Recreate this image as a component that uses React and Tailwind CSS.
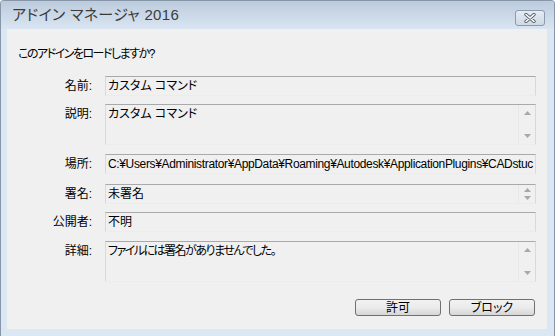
import React from "react";

const jp = "font-['Liberation_Sans','Noto_Sans_CJK_JP',sans-serif] [font-feature-settings:'palt']";

function Arrows({ small }) {
  return (
    <div className={`flex flex-col items-center justify-between w-[17px] border-l border-[#e8e8e8] ${small ? "py-[3px]" : "py-[6px]"}`}>
      <svg width="7" height="4" viewBox="0 0 7 4"><path d="M0 4 L3.5 0 L7 4 Z" fill="#a8a8a8" /></svg>
      <svg width="7" height="4" viewBox="0 0 7 4"><path d="M0 0 L3.5 4 L7 0 Z" fill="#a8a8a8" /></svg>
    </div>
  );
}

function Field({ h, text, scroll, small, tight }) {
  return (
    <div
      className="flex w-[431px] bg-[#f0f0f0] border border-t-[#a9a9a9] border-l-[#d9d9d9] border-r-[#d9d9d9] border-b-[#ececec] overflow-hidden"
      style={{ height: h }}
    >
      <div className={`flex-1 pl-[2px] pt-[2px] text-[12px] leading-[15px] text-black whitespace-nowrap overflow-hidden ${tight || ""}`}>
        {text}
      </div>
      {scroll && <Arrows small={small} />}
    </div>
  );
}

function Row({ label, mt, children }) {
  return (
    <div className="flex" style={{ marginTop: mt }}>
      <div className="w-[85px] text-right pt-[3px] text-[12px] leading-[15px] text-black">{label}</div>
      <div className="ml-[13px]">{children}</div>
    </div>
  );
}

function Btn({ children }) {
  return (
    <div className="w-[86px] h-[17px] rounded-[3px] border border-[#707070] bg-gradient-to-b from-[#f2f2f2] via-[#ebebeb] to-[#d6d6d6] flex items-center justify-center text-[12px] leading-none text-black">
      {children}
    </div>
  );
}

export default function App() {
  return (
    <div className={`w-[555px] h-[336px] ${jp} bg-[#dce7f4] border-l border-t border-r border-[#8796a8] rounded-tl-[4px] rounded-tr-[4px] flex flex-col overflow-hidden`}>
      <div className="h-[28px] bg-gradient-to-b from-[#bccbdc] to-[#d9e5f2] flex items-start">
        <div className="ml-[11px] mt-[5px] text-[15px] leading-[18px] text-[#3c3c3c] tracking-[0.3px]">アドイン マネージャ 2016</div>
        <div className="ml-auto mr-[9px] mt-[9px] w-[30px] h-[16px] rounded-[3px] border border-[#8d9aab] bg-gradient-to-b from-[#e4ebf3] to-[#cfdae6] flex items-center justify-center">
          <svg width="14" height="10" viewBox="0 0 14 10">
            <path d="M3 1.5 L11 8.5 M11 1.5 L3 8.5" stroke="#59626d" strokeWidth="3.4" strokeLinecap="round" />
            <path d="M3 1.5 L11 8.5 M11 1.5 L3 8.5" stroke="#ffffff" strokeWidth="1.6" strokeLinecap="round" />
          </svg>
        </div>
      </div>
      <div className="ml-[6px] mr-[7px] h-[300px] bg-[#f0f0f0] flex flex-col">
        <div className="ml-[11px] mt-[18px] text-[12px] leading-[15px] text-black tracking-[-1.5px]">このアドインをロードしますか?</div>
        <Row label="名前:" mt={14}><Field h={20} text="カスタム コマンド" /></Row>
        <Row label="説明:" mt={8}><Field h={41} text="カスタム コマンド" scroll /></Row>
        <Row label="場所:" mt={9}><Field h={20} tight="tracking-[-0.35px]" text="C:¥Users¥Administrator¥AppData¥Roaming¥Autodesk¥ApplicationPlugins¥CADstuc" /></Row>
        <Row label="署名:" mt={10}><Field h={20} text="未署名" scroll small /></Row>
        <Row label="公開者:" mt={8}><Field h={20} text="不明" /></Row>
        <Row label="詳細:" mt={9}><Field h={41} tight="tracking-[-1.5px]" text="ファイルには署名がありませんでした。" scroll /></Row>
        <div className="flex justify-end gap-[8px] mr-[12px] mt-[17px]">
          <Btn>許可</Btn>
          <Btn>ブロック</Btn>
        </div>
      </div>
    </div>
  );
}
